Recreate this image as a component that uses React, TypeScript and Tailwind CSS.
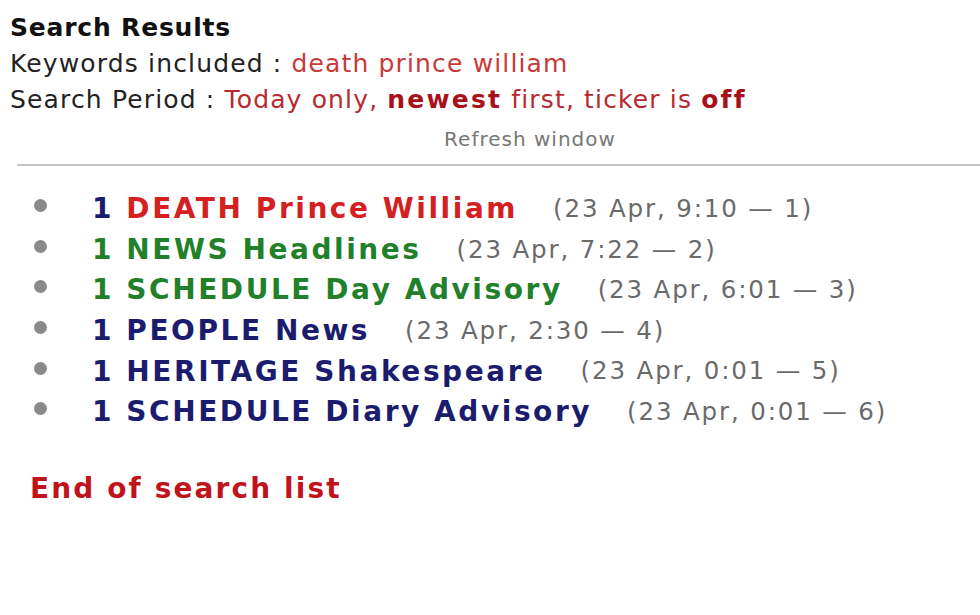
const results = [
  { label: "DEATH Prince William", meta: "(23 Apr, 9:10 — 1)", color: "text-[#d42020]", num: "text-[#1c1c6e]" },
  { label: "NEWS Headlines", meta: "(23 Apr, 7:22 — 2)", color: "text-[#22802a]", num: "text-[#22802a]" },
  { label: "SCHEDULE Day Advisory", meta: "(23 Apr, 6:01 — 3)", color: "text-[#22802a]", num: "text-[#22802a]" },
  { label: "PEOPLE News", meta: "(23 Apr, 2:30 — 4)", color: "text-[#1c1c6e]", num: "text-[#1c1c6e]" },
  { label: "HERITAGE Shakespeare", meta: "(23 Apr, 0:01 — 5)", color: "text-[#1c1c6e]", num: "text-[#1c1c6e]" },
  { label: "SCHEDULE Diary Advisory", meta: "(23 Apr, 0:01 — 6)", color: "text-[#1c1c6e]", num: "text-[#1c1c6e]" },
];

const App = () => {
  return (
    <div className="w-[980px] h-[615px] bg-white overflow-hidden font-['DejaVu_Sans',Verdana,sans-serif]">
      {/* Header */}
      <div className="pl-[10px] pt-[10px] text-[25px] leading-[36px] tracking-[1.15px] text-[#222]">
        <h1 className="font-bold tracking-[0.8px] text-[#111]">Search Results</h1>
        <div>
          Keywords included : <span className="text-[#c83a3a]">death prince william</span>
        </div>
        <div>
          Search Period : <span className="text-[#b8292f]">Today only, <b className="text-[#a8101a] tracking-[2.2px]">newest</b> first, ticker is <b className="text-[#a8101a] tracking-[2.2px]">off</b></span>
        </div>
      </div>
      <div className="text-center text-[20px] leading-[26px] tracking-[1px] text-[#777] pl-[80px] mt-[8px]">Refresh window</div>
      <hr className="ml-[17px] mt-[12px] border-0 h-[2px] bg-[#c4c4c4]" />

      {/* Results */}
      <ul className="mt-[23px] ml-[34px]">
        {results.map((r, i) => (
          <li key={i} className="flex items-center h-[40.6px]">
            <span className="w-[13px] h-[13px] rounded-full bg-[#8a8a8a] mr-[45px] -mt-[7px] shrink-0" />
            <span className={`font-bold text-[28px] tracking-[2.55px] ${r.color}`}>
              <span className={r.num}>1</span> {r.label}
            </span>
            <span className="ml-[35px] text-[24.5px] tracking-[1.85px] text-[#6a6a6a]">{r.meta}</span>
          </li>
        ))}
      </ul>

      <div className="mt-[35px] ml-[30px] font-bold text-[28px] tracking-[2.1px] text-[#c0141c]">End of search list</div>
    </div>
  );
};

export default App;
